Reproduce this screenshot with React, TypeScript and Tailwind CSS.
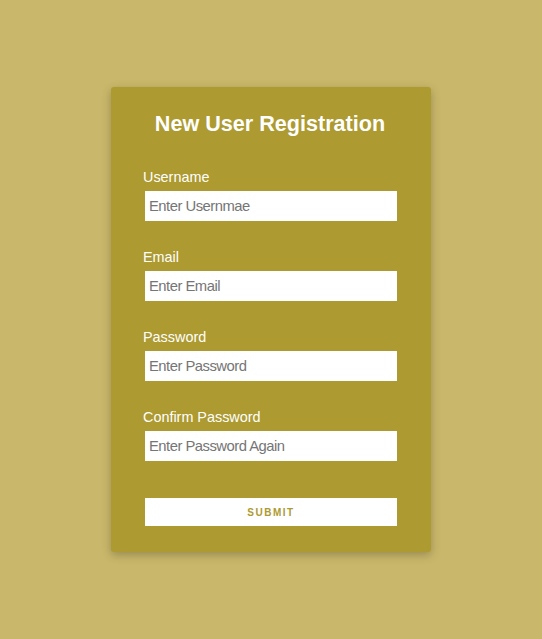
import { useState } from 'react'

const FIELDS = [
  { id: 'username', label: 'Username', type: 'text', placeholder: 'Enter Usernmae' },
  { id: 'email', label: 'Email', type: 'email', placeholder: 'Enter Email' },
  { id: 'password', label: 'Password', type: 'password', placeholder: 'Enter Password' },
  { id: 'confirm', label: 'Confirm Password', type: 'password', placeholder: 'Enter Password Again' },
]

export default function App() {
  const [values, setValues] = useState<Record<string, string>>({})

  return (
    <div className="min-h-screen bg-[#c9b86b] flex items-center justify-center font-['Liberation_Sans',Arial,sans-serif]">
      <form
        onSubmit={(e) => e.preventDefault()}
        className="w-[320px] bg-[#ad9a30] rounded-[3px] shadow-[0_3px_10px_rgba(0,0,0,0.25)] pt-[24px] pb-[26px] pl-[32px] pr-[34px]"
      >
        <h1 className="text-white text-[21.6px] leading-[25px] font-bold text-center mb-[32px]">
          New User Registration
        </h1>

        {FIELDS.map((field, i) => (
          <div key={field.id} className={i > 0 ? 'mt-[27px]' : ''}>
            <label htmlFor={field.id} className="block text-white text-[14.4px] leading-[18px] mb-[5px]">
              {field.label}
            </label>
            <input
              id={field.id}
              type={field.type}
              placeholder={field.placeholder}
              value={values[field.id] ?? ''}
              onChange={(e) => setValues({ ...values, [field.id]: e.target.value })}
              className="block ml-[2px] w-[252px] h-[30px] bg-white px-[4px] text-[14.8px] tracking-[-0.5px] text-gray-800 placeholder:text-[#757575] outline-none"
            />
          </div>
        ))}

        <button
          type="submit"
          className="block ml-[2px] mt-[37px] w-[252px] h-[28px] bg-white text-[#ad9a30] text-[10px] font-semibold tracking-[1.5px] uppercase"
        >
          Submit
        </button>
      </form>
    </div>
  )
}
